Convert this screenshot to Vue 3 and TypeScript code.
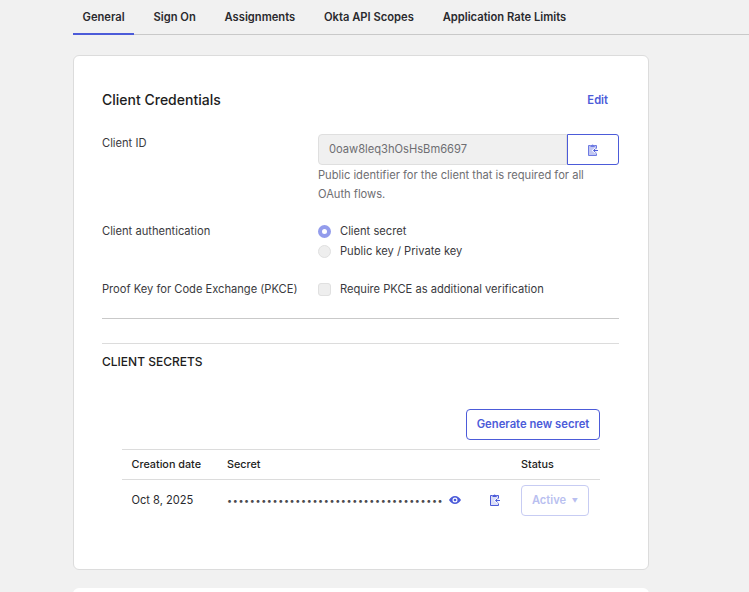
<script setup lang="ts">
const tabs = ['General', 'Sign On', 'Assignments', 'Okta API Scopes', 'Application Rate Limits']
const dots = '•'.repeat(38)
</script>

<template>
  <div class="page">
    <nav class="tabs">
      <a v-for="(t, i) in tabs" :key="t" class="tab" :class="{ active: i === 0 }">{{ t }}</a>
    </nav>

    <section class="card">
      <header class="head">
        <h2>Client Credentials</h2>
        <a class="edit">Edit</a>
      </header>

      <div class="row row-id">
        <label>Client ID</label>
        <div class="field">
          <div class="inputs">
            <div class="input">0oaw8leq3hOsHsBm6697</div>
            <button class="copy">
              <svg class="clip" width="10" height="12" viewBox="0 0 10 12">
                <path d="M.500 1.500h8v10h-8z" fill="#4c5bd9" fill-opacity=".35" />
                <path d="M2.500 1.500H.500v10h8V9.500M8.500 4.500v-3h-2" fill="none" stroke="#6d7ae2" />
                <path d="M2.500 3V1h1.200a1 1 0 0 1 1.800 0h1.200v2z" fill="#6d7ae2" />
                <path d="M10 6.500H6M7.600 4.700 5.400 6.500l2.200 1.800" fill="none" stroke="#fff" stroke-width="2.200" />
                <path d="M10 6.500H6M7.600 4.700 5.400 6.500l2.200 1.800" fill="none" stroke="#4c5bd9" />
              </svg>
            </button>
          </div>
          <p class="help">Public identifier for the client that is required for all OAuth flows.</p>
        </div>
      </div>

      <div class="row row-auth">
        <label>Client authentication</label>
        <div class="options">
          <div class="opt"><span class="radio on"></span>Client secret</div>
          <div class="opt"><span class="radio"></span>Public key / Private key</div>
        </div>
      </div>

      <div class="row row-pkce">
        <label>Proof Key for Code Exchange (PKCE)</label>
        <div class="opt"><span class="check"></span>Require PKCE as additional verification</div>
      </div>

      <hr class="rule-dark" />
      <hr class="rule-light" />

      <h3>CLIENT SECRETS</h3>

      <div class="secrets">
        <div class="actions"><button class="generate">Generate new secret</button></div>
        <div class="table">
          <div class="tr th">
            <span class="c-date">Creation date</span>
            <span class="c-secret">Secret</span>
            <span class="c-status">Status</span>
          </div>
          <div class="tr td">
            <span class="c-date">Oct 8, 2025</span>
            <span class="c-secret secret">
              <span class="dots">{{ dots }}</span>
              <svg class="eye" width="12" height="8" viewBox="0 0 12 8">
                <path fill-rule="evenodd" d="M6 0c2.600 0 4.800 1.700 6 4-1.200 2.300-3.400 4-6 4S1.200 6.300 0 4c1.200-2.300 3.400-4 6-4zm0 1.500a2.500 2.500 0 1 0 0 5 2.500 2.500 0 0 0 0-5z" fill="#4c5bd9" />
                <circle cx="6" cy="4" r="1.300" fill="#4c5bd9" />
              </svg>
              <svg class="clip clip-row" width="10" height="12" viewBox="0 0 10 12">
                <path d="M.500 1.500h8v10h-8z" fill="#4c5bd9" fill-opacity=".2" />
                <path d="M2.500 1.500H.500v10h8V9.500M8.500 4.500v-3h-2" fill="none" stroke="#4c5bd9" />
                <path d="M2.500 3V1h1.200a1 1 0 0 1 1.800 0h1.200v2z" fill="#4c5bd9" />
                <path d="M10 6.500H6M7.600 4.700 5.400 6.500l2.200 1.800" fill="none" stroke="#fff" stroke-width="2.200" />
                <path d="M10 6.500H6M7.600 4.700 5.400 6.500l2.200 1.800" fill="none" stroke="#4c5bd9" />
              </svg>
            </span>
            <span class="c-status"><span class="status">Active <i>▼</i></span></span>
          </div>
        </div>
      </div>
    </section>

    <div class="next-card"></div>
  </div>
</template>

<style>
html, body { margin: 0; background: #f1f1f1; overflow: hidden; }
</style>

<style scoped>
.page {
  width: 749px;
  height: 592px;
  overflow: hidden;
  background: #f1f1f1;
  font-family: Inter, "Liberation Sans", sans-serif;
  color: #1d1d21;
}
.tabs {
  display: flex;
  height: 34px;
  margin-left: 73px;
  border-bottom: 1px solid #c9c9c9;
}
.tab {
  box-sizing: border-box;
  height: 35px;
  padding: 10px 9.500px 0;
  margin-right: 9.800px;
  font-size: 11.200px;
  line-height: 14px;
  font-weight: 600;
  color: #2a2a2e;
  white-space: nowrap;
}
.tab.active { border-bottom: 2px solid #4c5bd9; }
.card {
  box-sizing: border-box;
  width: 576px;
  height: 515px;
  margin: 20px 0 0 73px;
  padding: 0 29px 0 28px;
  background: #fff;
  border: 1px solid #dcdcdc;
  border-radius: 6px;
}
.head {
  display: flex;
  justify-content: space-between;
  align-items: center;
  height: 28px;
  padding-top: 30px;
}
h2 { margin: 0; font-size: 14px; line-height: 28px; font-weight: 500; color: #1d1d21; }
.edit { font-size: 11.200px; font-weight: 600; color: #4c5bd9; margin-right: 11px; }
.row { display: flex; font-size: 11.150px; line-height: 16px; color: #3a3a3e; }
.row label { width: 216px; flex: none; }
.row-id { margin-top: 20px; }
.row-id label { padding-top: 1px; }
.inputs { display: flex; height: 31px; }
.input {
  box-sizing: border-box;
  width: 249px;
  padding-left: 10px;
  background: #f0f0f0;
  border: 1px solid #dfdfdf;
  border-radius: 4px 0 0 4px;
  font-size: 11.150px;
  line-height: 29px;
  color: #6e6e72;
}
.copy {
  box-sizing: border-box;
  width: 52px;
  padding: 0;
  background: #fff;
  border: 1px solid #4c5bd9;
  border-radius: 0 3px 3px 0;
  display: flex;
  align-items: center;
  justify-content: center;
}
.help {
  margin: 0;
  padding-top: 1px;
  width: 290px;
  font-size: 11.150px;
  line-height: 19px;
  color: #6e6e72;
}
.row-auth { margin-top: 19px; }
.options { display: flex; flex-direction: column; gap: 4px; }
.opt { display: flex; align-items: center; gap: 9px; height: 16px; font-size: 11.150px; color: #3a3a3e; }
.radio, .check {
  flex: none;
  box-sizing: border-box;
  width: 13px;
  height: 13px;
  background: #eeeeee;
  border: 1px solid #e0e0e0;
}
.radio { border-radius: 50%; }
.radio.on { background: #fff; border: 4px solid #939cec; }
.check { border-radius: 3px; }
.row-pkce { margin-top: 22px; }
.rule-dark, .rule-light { margin: 0; border: 0; height: 1px; }
.rule-dark { margin-top: 21px; background: #c9c9c9; }
.rule-light { margin-top: 24px; background: #dcdcdc; }
h3 { margin: 11px 0 0; font-size: 12px; line-height: 14px; font-weight: 500; color: #1d1d21; }
.secrets { margin: 40px 19px 0 20px; }
.actions { display: flex; justify-content: flex-end; }
.generate {
  box-sizing: border-box;
  height: 31px;
  width: 134px;
  padding: 0 0 1px;
  background: #fff;
  border: 1px solid #4c5bd9;
  border-radius: 4px;
  color: #4c5bd9;
  font: 600 11.250px Inter, "Liberation Sans", sans-serif;
}
.table { margin-top: 9px; font-size: 11.100px; }
.tr { display: flex; align-items: center; box-sizing: border-box; border-top: 1px solid #dcdcdc; }
.th { height: 30px; padding-bottom: 1px; font-size: 10.800px; font-weight: 500; color: #1d1d21; }
.td { height: 41px; color: #2a2a2e; align-items: flex-start; padding-top: 5px; }
.c-date { width: 105px; padding-left: 9.500px; box-sizing: border-box; }
.td .c-date, .td .c-secret { margin-top: 8px; }
.c-secret { width: 294px; }
.c-status { flex: none; }
.secret { display: flex; align-items: center; height: 14px; }
.dots { font-size: 9px; letter-spacing: .63px; color: #4a4a4e; width: 222px; white-space: nowrap; overflow: hidden; }
.eye { flex: none; }
.clip { display: block; }
.clip-row { margin-left: 29px; flex: none; }
.status {
  display: inline-block;
  box-sizing: border-box;
  width: 68px;
  height: 31px;
  line-height: 29px;
  text-align: center;
  border: 1px solid #c7ccf3;
  border-radius: 4px;
  color: #b9bff0;
  font-weight: 600;
}
.status i { font-style: normal; font-size: 6px; margin-left: 3px; vertical-align: 1px; }
.next-card {
  width: 576px;
  height: 40px;
  margin: 18px 0 0 73px;
  background: #fff;
  border-radius: 6px;
}
</style>
